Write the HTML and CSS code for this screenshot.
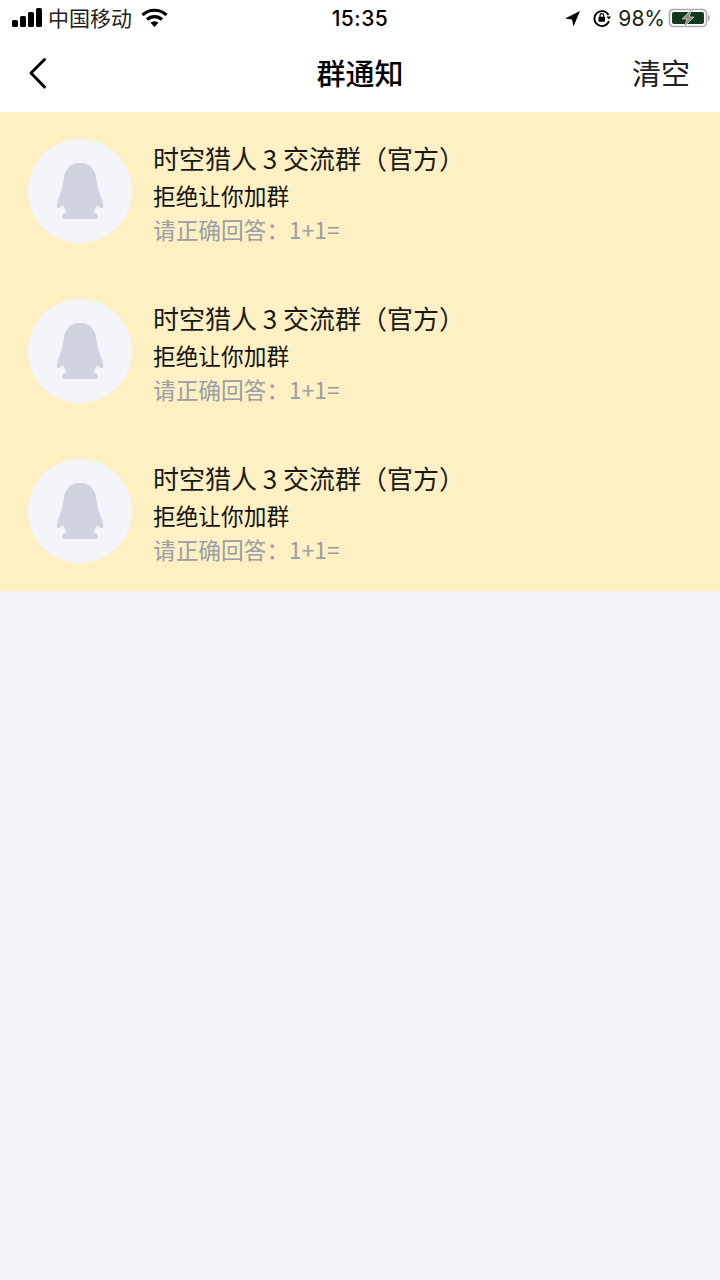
FILE: index.html
```html
<!DOCTYPE html>
<html>
	<head>
		<meta charset="utf-8">
		<title>群通知</title>
		<link rel="stylesheet" href="styles.css">
	</head>
	<body>
		<div class="statusbar">
			<div class="status-left">
				<svg class="signal" width="31" height="20" viewBox="0 0 31 20">
					<rect x="0" y="12" width="6" height="7" rx="1.500"/>
					<rect x="8" y="8" width="6" height="11" rx="1.500"/>
					<rect x="16" y="4" width="6" height="15" rx="1.500"/>
					<rect x="24" y="0" width="6" height="19" rx="1.500"/>
				</svg>
				<span class="carrier">中国移动</span>
				<svg class="wifi" width="27" height="20" viewBox="0 0 27 20">
					<path d="M1.500 7a17.500 17.500 0 0 1 24 0" fill="none" stroke="#000" stroke-width="3.200"/>
					<path d="M6 11.500a11 11 0 0 1 15 0" fill="none" stroke="#000" stroke-width="3.200"/>
					<path d="M9.500 14.800a6 6 0 0 1 8 0L13.500 19z"/>
				</svg>
			</div>
			<div class="status-time">15:35</div>
			<div class="status-right">
				<svg class="arrow" width="17" height="17" viewBox="0 0 17 17">
					<path d="M16 1L1 8.500l7 1 1.500 7z"/>
				</svg>
				<svg class="lock" width="20" height="20" viewBox="0 0 20 20">
					<path d="M16.500 7A7.500 7.500 0 1 0 17 13" fill="none" stroke="#000" stroke-width="1.800"/>
					<path d="M14.500 8.500h4.500l-2.200 3z"/>
					<rect x="6.500" y="8.800" width="6.500" height="5" rx="1"/>
					<path d="M8 9V7.500a1.800 1.800 0 0 1 3.600 0V9" fill="none" stroke="#000" stroke-width="1.200"/>
				</svg>
				<span class="percent">98%</span>
				<svg width="42" height="20" viewBox="0 0 42 20">
					<rect x="1.500" y="1.500" width="37" height="17" rx="4" fill="none" stroke="#a9aca6" stroke-width="1.600"/>
					<rect x="4" y="4" width="32" height="12" rx="2" fill="#123a1c"/>
					<path d="M40 7v6c1.200-.5 1.800-1.500 1.800-3s-.6-2.500-1.800-3z" fill="#a9aca6"/>
					<path d="M24 1L14 11h5l-3 8 10-10h-5z" fill="#8d918a" stroke="#c9ccc6" stroke-width="0.800"/>
				</svg>
			</div>
		</div>
		<div class="navbar">
			<svg class="back" width="20" height="34" viewBox="0 0 20 34">
				<path d="M16.500 3.500L3 17l13.500 14" fill="none" stroke="#000" stroke-width="3" stroke-linecap="round" stroke-linejoin="round"/>
			</svg>
			<div class="nav-title">群通知</div>
			<div class="nav-action">清空</div>
		</div>
		<div class="list">
			<div class="item">
				<div class="avatar">
					<svg width="46" height="56" viewBox="0 0 46 56"><path class="penguin" d="M23 0c9 0 15 6 16 14 1 7 2 13 5 20 2 4 3 9 2 11-1 1-4-1-6-3-1 3-2 5-4 7 3 1 5 3 5 5 0 1-1 2-3 2H8c-2 0-3-1-3-2 0-2 2-4 5-5-2-2-3-4-4-7-2 2-5 4-6 3-1-2 0-7 2-11 3-7 4-13 5-20C8 6 14 0 23 0z"/></svg>
				</div>
				<div class="item-text">
					<div class="group-name">时空猎人 3 交流群（官方）</div>
					<div class="message">拒绝让你加群</div>
					<div class="detail">请正确回答：1+1=</div>
				</div>
			</div>
			<div class="item">
				<div class="avatar">
					<svg width="46" height="56" viewBox="0 0 46 56"><path class="penguin" d="M23 0c9 0 15 6 16 14 1 7 2 13 5 20 2 4 3 9 2 11-1 1-4-1-6-3-1 3-2 5-4 7 3 1 5 3 5 5 0 1-1 2-3 2H8c-2 0-3-1-3-2 0-2 2-4 5-5-2-2-3-4-4-7-2 2-5 4-6 3-1-2 0-7 2-11 3-7 4-13 5-20C8 6 14 0 23 0z"/></svg>
				</div>
				<div class="item-text">
					<div class="group-name">时空猎人 3 交流群（官方）</div>
					<div class="message">拒绝让你加群</div>
					<div class="detail">请正确回答：1+1=</div>
				</div>
			</div>
			<div class="item">
				<div class="avatar">
					<svg width="46" height="56" viewBox="0 0 46 56"><path class="penguin" d="M23 0c9 0 15 6 16 14 1 7 2 13 5 20 2 4 3 9 2 11-1 1-4-1-6-3-1 3-2 5-4 7 3 1 5 3 5 5 0 1-1 2-3 2H8c-2 0-3-1-3-2 0-2 2-4 5-5-2-2-3-4-4-7-2 2-5 4-6 3-1-2 0-7 2-11 3-7 4-13 5-20C8 6 14 0 23 0z"/></svg>
				</div>
				<div class="item-text">
					<div class="group-name">时空猎人 3 交流群（官方）</div>
					<div class="message">拒绝让你加群</div>
					<div class="detail">请正确回答：1+1=</div>
				</div>
			</div>
		</div>
	</body>
</html>
```

FILE: styles.css
```css
html, body{
	margin: 0;
	height: 100%;
}
body{
	width: 720px;
	height: 1280px;
	overflow: hidden;
	background: #f4f5f9;
	color: #000;
	font-family: "Noto Sans CJK SC", "Liberation Sans", sans-serif;
}
.statusbar{
	height: 36px;
	padding: 0 10px;
	background: #fff;
	display: grid;
	grid-template-columns: 1fr auto 1fr;
	align-items: center;
}
.status-left, .status-right{
	display: flex;
	align-items: center;
}
.status-left{
	gap: 7px;
}
.status-right{
	justify-content: flex-end;
	gap: 5px;
}
.signal{
	margin-left: 2px;
}
.carrier{
	font-size: 21px;
	line-height: 34px;
	height: 36px;
	color: #222;
	margin-left: -2px;
}
.wifi{
	margin-left: 2px;
}
.arrow{
	margin-right: 6px;
}
.lock{
	margin-right: 1px;
}
.status-time{
	font-family: "Inter", "Liberation Sans", sans-serif;
	font-size: 21px;
	font-weight: 500;
	letter-spacing: 0.5px;
}
.percent{
	font-family: "Inter", "Liberation Sans", sans-serif;
	font-size: 21px;
	color: #222;
	margin-right: -2px;
}
.navbar{
	height: 76px;
	box-sizing: border-box;
	background: #fff;
	display: flex;
	align-items: center;
	justify-content: space-between;
	padding: 0 30px 5px 28px;
	position: relative;
}
.back{
	margin-top: 3px;
}
.nav-title{
	position: absolute;
	left: 0;
	right: 0;
	text-align: center;
	font-size: 29px;
	font-weight: 500;
	line-height: 40px;
}
.nav-action{
	font-size: 29px;
	line-height: 40px;
	color: #222;
}
.list{
	background: #fdf0c3;
	height: 479px;
}
.item{
	height: 160px;
	box-sizing: border-box;
	padding: 27px 0 0 28px;
	display: flex;
	gap: 21px;
}
.avatar{
	width: 104px;
	height: 104px;
	border-radius: 50%;
	background: #f3f5fa;
	display: flex;
	align-items: center;
	justify-content: center;
	flex: none;
}
.penguin{
	fill: #d0d3df;
}
.group-name{
	font-size: 26px;
	line-height: 38px;
	margin-bottom: 1px;
	color: #1a1a1a;
}
.message{
	font-size: 22.7px;
	line-height: 36px;
	color: #111;
}
.detail{
	font-size: 22.7px;
	line-height: 32px;
	color: #9b9ea6;
}
```
